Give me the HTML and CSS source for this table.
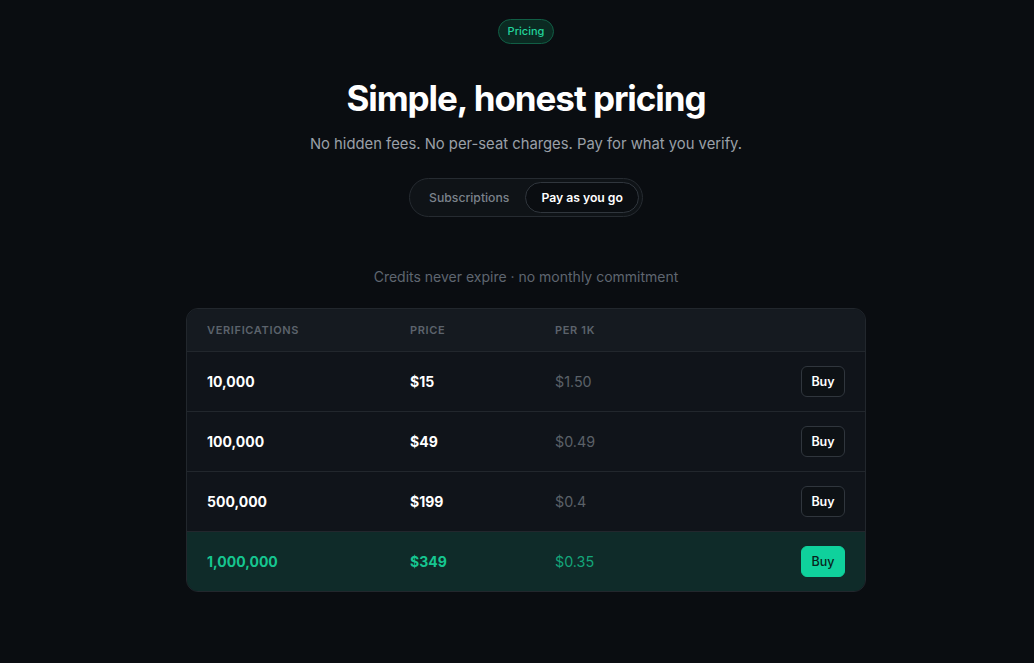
FILE: index.html
```html
<!DOCTYPE html>
<html>
<head>
<meta charset="utf-8">
<link rel="stylesheet" href="styles.css">
</head>
<body>
<main class="page">
  <span class="badge">Pricing</span>
  <h1 class="title">Simple, honest pricing</h1>
  <p class="subtitle">No hidden fees. No per-seat charges. Pay for what you verify.</p>
  <div class="toggle">
    <button class="tab">Subscriptions</button>
    <button class="tab active">Pay as you go</button>
  </div>
  <p class="note">Credits never expire · no monthly commitment</p>
  <div class="table">
    <div class="row head">
      <span>Verifications</span><span>Price</span><span>Per 1K</span><span></span>
    </div>
    <div class="row">
      <span class="qty">10,000</span><span class="price">$15</span><span class="per">$1.50</span><span class="act"><button class="buy">Buy</button></span>
    </div>
    <div class="row">
      <span class="qty">100,000</span><span class="price">$49</span><span class="per">$0.49</span><span class="act"><button class="buy">Buy</button></span>
    </div>
    <div class="row">
      <span class="qty">500,000</span><span class="price">$199</span><span class="per">$0.4</span><span class="act"><button class="buy">Buy</button></span>
    </div>
    <div class="row best">
      <span class="qty">1,000,000</span><span class="price">$349</span><span class="per">$0.35</span><span class="act"><button class="buy">Buy</button></span>
    </div>
  </div>
</main>
</body>
</html>
```

FILE: styles.css
```css
* { box-sizing: border-box; }
html, body { margin: 0; padding: 0; background: #0a0d11; }
body { font-family: Inter, "Noto Sans", sans-serif; color: #f3f4f6; }
.page {
  display: flex;
  flex-direction: column;
  align-items: center;
  padding: 19px 0 0 18px;
}
.badge {
  display: inline-block;
  height: 25px;
  line-height: 23px;
  padding: 0 9px;
  border-radius: 13px;
  border: 1px solid #115e45;
  background: #0b2a22;
  color: #22d39a;
  font-size: 11px;
  font-weight: 500;
}
.title {
  margin: 31px 0 0;
  font-size: 35px;
  line-height: 46px;
  font-weight: 700;
  letter-spacing: -0.03em;
  color: #ffffff;
}
.subtitle {
  margin: 12px 0 0;
  font-size: 14.8px;
  line-height: 22px;
  color: #9aa0a8;
}
.toggle {
  margin-top: 23px;
  display: flex;
  gap: 0;
  padding: 3px;
  border: 1px solid #262b31;
  border-radius: 20px;
  background: #0f1317;
}
.tab {
  font-family: inherit;
  font-size: 12.2px;
  font-weight: 500;
  height: 31px;
  padding: 0 15px;
  border-radius: 16px;
  border: 1px solid transparent;
  background: transparent;
  color: #7b828b;
  cursor: pointer;
}
.tab.active {
  color: #ffffff;
  font-weight: 600;
  background: #0a0d11;
  border-color: #30363d;
}
.note {
  margin: 50px 0 0;
  font-size: 14px;
  line-height: 20px;
  color: #5f6670;
}
.table {
  margin-top: 21px;
  width: 680px;
  border: 1px solid #22272d;
  border-radius: 12px;
  overflow: hidden;
  background: #10141a;
}
.row {
  display: grid;
  grid-template-columns: 203px 145px 1fr auto;
  align-items: center;
  padding: 0 20px;
  height: 60px;
  border-top: 1px solid #22272d;
  font-size: 14px;
}
.row.head {
  height: 42px;
  border-top: none;
  background: #151a20;
  font-size: 11px;
  font-weight: 600;
  letter-spacing: 0.06em;
  text-transform: uppercase;
  color: #5c636c;
}
.qty, .price { font-weight: 700; color: #ffffff; }
.per { color: #5b6168; font-size: 14.3px; }
.act { display: flex; justify-content: flex-end; }
.buy {
  font-family: inherit;
  font-size: 12.5px;
  font-weight: 600;
  width: 44px;
  height: 31px;
  border-radius: 6px;
  border: 1px solid #30363d;
  background: #0d1115;
  color: #ffffff;
  cursor: pointer;
}
.row.best { background: #0f2b29; }
.row.best .qty, .row.best .price { color: #16c690; }
.row.best .per { color: #14a67a; }
.row.best .buy {
  background: #0fd19c;
  border-color: #0fd19c;
  color: #08231b;
  font-weight: 500;
}
```
